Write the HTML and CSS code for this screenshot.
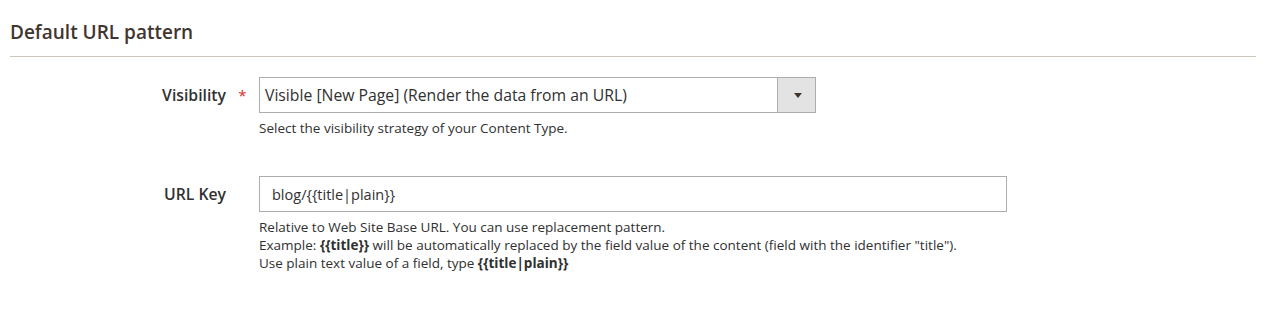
FILE: index.html
```html
<!DOCTYPE html>
<html lang="en">
<head>
  <meta charset="UTF-8">
  <title>Default URL pattern</title>
  <link rel="stylesheet" href="styles.css">
</head>
<body>
  <fieldset class="fieldset">
    <div class="fieldset-title">Default URL pattern</div>

    <div class="field">
      <label class="field-label" for="visibility">Visibility</label>
      <span class="required">*</span>
      <div class="field-control">
        <div class="select-wrap">
          <select id="visibility" class="select">
            <option>Visible [New Page] (Render the data from an URL)</option>
          </select>
          <span class="select-arrow"></span>
        </div>
        <div class="field-note">Select the visibility strategy of your Content Type.</div>
      </div>
    </div>

    <div class="field field-url">
      <label class="field-label" for="urlKey">URL Key</label>
      <span class="required"></span>
      <div class="field-control">
        <input id="urlKey" class="input-text" type="text" value="blog/{{title|plain}}">
        <div class="field-note">
          Relative to Web Site Base URL. You can use replacement pattern.<br>
          Example: <strong>{{title}}</strong> will be automatically replaced by the field value of the content (field with the identifier "title").<br>
          Use plain text value of a field, type <strong>{{title|plain}}</strong>
        </div>
      </div>
    </div>
  </fieldset>
</body>
</html>
```

FILE: styles.css
```css
/* Reset */
* {
  box-sizing: border-box;
  margin: 0;
  padding: 0;
}

body {
  font-family: "Open Sans", "Liberation Sans", Arial, sans-serif;
  background: #fff;
  color: #303030;
  width: 1272px;
  height: 312px;
}

.fieldset {
  border: none;
  padding: 21px 16px 0 10px;
}

.fieldset-title {
  font-size: 19px;
  line-height: 22px;
  font-weight: 600;
  color: #41362f;
  padding-bottom: 13px;
  border-bottom: 1px solid #cdc6b8;
  margin-bottom: 20px;
}

.field {
  display: grid;
  grid-template-columns: 216px 33px 1fr;
  align-items: start;
}

.field-url {
  margin-top: 39px;
}

.field-label {
  text-align: right;
  font-size: 15.75px;
  font-weight: 600;
  line-height: 36px;
  color: #303030;
}

.required {
  text-align: center;
  color: #e22626;
  font-size: 15px;
  line-height: 36px;
}

.select-wrap {
  display: flex;
  width: 557px;
  height: 36px;
  border: 1px solid #adadad;
  background: #fff;
}

.select {
  flex: 1;
  appearance: none;
  -webkit-appearance: none;
  border: none;
  background: transparent;
  font-family: inherit;
  font-size: 15.75px;
  color: #303030;
  padding: 0 5px;
  outline: none;
}

.select-arrow {
  width: 38px;
  border-left: 1px solid #adadad;
  background: #e3e3e3;
  display: flex;
  align-items: center;
  justify-content: center;
}

.select-arrow::after {
  content: "";
  border-left: 4px solid transparent;
  border-right: 4px solid transparent;
  border-top: 5px solid #41362f;
  margin-left: 2px;
}

.input-text {
  display: block;
  width: 748px;
  height: 36px;
  border: 1px solid #adadad;
  font-family: inherit;
  font-size: 14.5px;
  color: #303030;
  padding: 0 12px;
  outline: none;
}

.field-note {
  font-size: 13.5px;
  line-height: 18px;
  margin-top: 6px;
  color: #303030;
}

.field-note strong {
  font-weight: 700;
}
```
